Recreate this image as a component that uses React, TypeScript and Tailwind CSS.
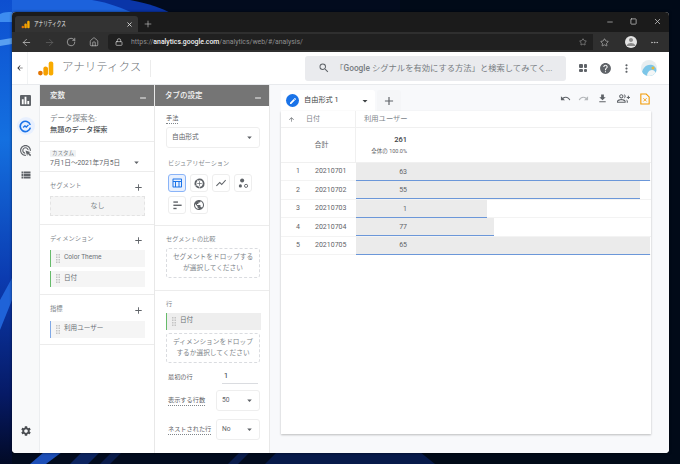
import React from 'react';
import { ArrowLeft, ArrowRight, RotateCw, Home, Lock, Star, Plus, X, Minus, Square, MoreHorizontal } from 'lucide-react';
import {
  MdArrowBack, MdArrowDropDown, MdBarChart, MdAdsClick, MdViewList, MdSettings, MdSearch, MdHelp, MdMoreVert,
  MdOutlineTableChart, MdShowChart, MdPublic, MdUndo, MdRedo, MdFileDownload,
  MdOutlineGroupAdd, MdEdit, MdArrowUpward, MdAdd, MdRemove, MdPerson,
} from 'react-icons/md';

const rows = [
  { n: 1, date: '20210701', v: 63, w: 294 },
  { n: 2, date: '20210702', v: 55, w: 284 },
  { n: 3, date: '20210703', v: 1, w: 131 },
  { n: 4, date: '20210704', v: 77, w: 138 },
  { n: 5, date: '20210705', v: 65, w: 294 },
];

const Wallpaper = () => (
  <svg className="absolute inset-0" width="680" height="464" viewBox="0 0 680 464">
    <defs>
      <linearGradient id="wall" x1="0" y1="0" x2="0" y2="1">
        <stop offset="0" stopColor="#0d4fd0" />
        <stop offset="0.3" stopColor="#1470e0" />
        <stop offset="0.6" stopColor="#0b3bb0" />
        <stop offset="0.85" stopColor="#061a66" />
        <stop offset="1" stopColor="#020a26" />
      </linearGradient>
    </defs>
    <rect width="680" height="464" fill="#020b1e" />
    <rect x="400" width="280" height="464" fill="#010a18" />
    <path d="M0 0H130C150 4 162 8 172 14L172 30H0Z" fill="#0a35a8" />
    <path d="M0 0H92C110 3 122 8 135 14H0Z" fill="#1c62dc" />
    <rect x="0" y="0" width="12" height="464" fill="url(#wall)" />
    <path d="M0 14C4 12 8 12 12 12V22H0Z" fill="#3d8cf0" />
    <path d="M0 40L12 38V44L0 46Z" fill="#5aa0f0" />
    <path d="M0 300L12 278V300L0 330Z" fill="#1f63d8" />
    <path d="M30 464L44 452H62L46 464Z" fill="#1d4fb8" />
    <path d="M70 464L82 452H100L88 464Z" fill="#0c2460" />
    <path d="M100 464L112 452H122L110 464Z" fill="#0a1c4c" />
    <path d="M228 464L240 452H250L238 464Z" fill="#0a1c4c" />
    <path d="M265 464L277 452H420L435 464Z" fill="#071a4a" />
  </svg>
);

const Logo = ({ className }: { className: string }) => (
  <svg className={className} viewBox="0 0 24 24">
    <rect x="16.5" y="2" width="6.5" height="20" rx="3" fill="#f9ab00" />
    <path d="M9 12c0-1.7 1.3-3 3-3s3.5 1.3 3.5 3v7c0 1.7-1.3 3-3.2 3S9 20.7 9 19z" fill="#f5a000" />
    <circle cx="4.8" cy="18.5" r="3.3" fill="#e37400" />
  </svg>
);

const ChromeBar = () => (
  <>
    <div className="flex h-5 shrink-0 items-end bg-[#1b1b1b] pl-[3px]">
      <div className="flex h-4 w-[123px] items-center rounded-t-[3px] bg-[#333333] pl-[6px] pr-[5px]">
        <Logo className="h-[9px] w-[9px]" />
        <span className="ml-[4px] w-[36px] origin-left scale-x-[0.66] whitespace-nowrap text-[7px] text-[#e8e8e8]">アナリティクス</span>
        <X className="ml-auto h-[7px] w-[7px] text-[#dddddd]" strokeWidth={3} />
      </div>
      <Plus className="ml-[5px] mb-[3px] h-[10px] w-[10px] text-[#c8c8c8]" strokeWidth={1.5} />
      <div className="ml-auto mb-[6px] flex items-center gap-[16px] pr-[7px]">
        <Minus className="h-[8px] w-[8px] text-[#cccccc]" />
        <Square className="h-[7px] w-[7px] text-[#cccccc]" strokeWidth={2.5} />
        <X className="h-[9px] w-[9px] text-[#cccccc]" strokeWidth={2} />
      </div>
    </div>
    <div className="flex h-5 shrink-0 items-center bg-[#2f2f2f] text-[#d0d0d0]">
      <div className="flex w-[96px] items-center pl-[9px]">
        <ArrowLeft className="h-[11px] w-[11px]" strokeWidth={1.5} />
        <ArrowRight className="ml-[12px] h-[11px] w-[11px] text-[#666666]" strokeWidth={1.5} />
        <RotateCw className="ml-[11px] h-[10px] w-[10px]" strokeWidth={1.5} />
        <Home className="ml-[13px] h-[10px] w-[10px]" strokeWidth={1.5} />
      </div>
      <div className="flex h-4 w-[485px] items-center rounded-l-[3px] bg-[#202020] pl-[7px] pr-[6px]">
        <Lock className="h-[8px] w-[8px] text-[#d8d8d8]" strokeWidth={2} />
        <span className="ml-[8px] whitespace-nowrap text-[6.9px] text-[#8e8e8e]">
          https://<span className="font-medium text-[#f0f0f0]">analytics.google.com</span>/analytics/web/#/analysis/
        </span>
        <Star className="ml-auto h-[8px] w-[8px] text-[#bbbbbb]" strokeWidth={1.5} />
      </div>
      <Star className="ml-[7px] h-[9px] w-[9px] text-[#d8d8d8]" strokeWidth={1.5} />
      <div className="ml-[16px] flex h-[12px] w-[12px] items-center justify-center overflow-hidden rounded-full bg-[#e4e4e4]">
        <MdPerson className="h-[12px] w-[12px] text-[#8a8a8a]" />
      </div>
      <MoreHorizontal className="ml-[13px] h-[9px] w-[9px] text-[#c8c8c8]" />
    </div>
  </>
);

const AppHeader = () => (
  <div className="flex h-[33px] shrink-0 items-center border-b border-[#e8eaed] bg-white">
    <div className="flex h-full w-[16px] items-center justify-center border-r border-[#f1f3f4]">
      <MdArrowBack className="h-[8px] w-[8px] text-[#202124]" />
    </div>
    <Logo className="ml-[9px] h-[17px] w-[17px]" />
    <span className="ml-[8px] text-[11.5px] font-light text-[#6b7075]">アナリティクス</span>
    <div className="ml-[9px] h-[17px] w-px bg-[#ececec]" />
    <div className="ml-[154px] flex h-[25px] w-[261px] items-center rounded-[3px] bg-[#eaebee] pl-[13px]">
      <MdSearch className="h-[12px] w-[12px] text-[#5f6368]" />
      <span className="ml-[5px] whitespace-nowrap text-[8.3px] text-[#777c81]">
        「<span className="font-medium">Google</span> シグナルを有効にする方法」と検索してみてく...
      </span>
    </div>
    <div className="ml-[13px] grid h-[8px] w-[8px] grid-cols-2 gap-[1px]">
      <i className="rounded-[1px] bg-[#5f6368]" />
      <i className="rounded-[1px] bg-[#5f6368]" />
      <i className="rounded-[1px] bg-[#5f6368]" />
      <i className="rounded-[1px] bg-[#5f6368]" />
    </div>
    <MdHelp className="ml-[12px] h-[13px] w-[13px] text-[#5f6368]" />
    <MdMoreVert className="ml-[8px] h-[13px] w-[13px] text-[#5f6368]" />
    <div className="ml-[8px] h-[16px] w-[16px] overflow-hidden rounded-full bg-[#e8eef0]">
      <svg viewBox="0 0 16 16" className="h-full w-full">
        <path d="M1 16C0 9 5 4 11 5c3 .6 5 4 5 8v3z" fill="#7cc6e8" />
        <path d="M6 16c0-3 2-6 5-6s4 3 4 6z" fill="#f3f6f6" />
        <circle cx="12" cy="8" r="1.5" fill="#e6b93a" />
      </svg>
    </div>
  </div>
);

const Sidebar = () => (
  <div className="flex w-[28px] shrink-0 flex-col items-center border-r border-[#eceef0] bg-[#f8f9fa] text-[#5f6368]">
    <MdBarChart className="mt-[10px] h-[11px] w-[11px] rounded-[1px] bg-[#5f6368] text-white" />
    <div className="mt-[11px] flex h-[18px] w-[18px] shrink-0 items-center justify-center rounded-full bg-[#e8f0fe]">
      <svg viewBox="0 0 24 24" className="h-[13px] w-[13px]" fill="none" stroke="#1a73e8" strokeWidth="3">
        <path d="M20.8 9A9.5 9.5 0 1 0 21 14" />
        <path d="M7.5 14l3.5-3 2.5 2 4-4" strokeWidth="2.5" />
      </svg>
    </div>
    <MdAdsClick className="mt-[8.5px] h-[13px] w-[13px] shrink-0" />
    <MdViewList className="mt-[12.5px] h-[12px] w-[12px] shrink-0" />
    <MdSettings className="mb-[16px] mt-auto h-[12px] w-[12px] text-[#4a4d51]" />
  </div>
);

const PanelHeader = ({ title }: { title: string }) => (
  <div className="flex h-[21px] shrink-0 items-start justify-between bg-[#757575] pl-[10px] pr-[6px] pt-[5px] text-[7.5px] font-medium text-[#f4f4f4]">
    <span>{title}</span>
    <MdRemove className="mt-[3px] h-[10px] w-[10px]" />
  </div>
);

const Dots = () => (
  <svg width="4" height="9" viewBox="0 0 4 9" className="shrink-0" fill="#c4c4c4">
    <rect x="0" y="0" width="1.5" height="1.5" />
    <rect x="2.5" y="0" width="1.5" height="1.5" />
    <rect x="0" y="2.5" width="1.5" height="1.5" />
    <rect x="2.5" y="2.5" width="1.5" height="1.5" />
    <rect x="0" y="5" width="1.5" height="1.5" />
    <rect x="2.5" y="5" width="1.5" height="1.5" />
    <rect x="0" y="7.5" width="1.5" height="1.5" />
    <rect x="2.5" y="7.5" width="1.5" height="1.5" />
  </svg>
);

const Chip = ({ label, blue, darker }: { label: string; blue?: boolean; darker?: boolean }) => (
  <div
    className={`flex h-[16.5px] w-[95px] items-center gap-[4px] border-l-[1.5px] pl-[5px] text-[6.6px] text-[#6b7075] ${blue ? 'border-[#7fa8e6]' : 'border-[#66bb6a]'} ${darker ? 'bg-[#eeeeee]' : 'bg-[#f5f5f5]'}`}
  >
    <Dots />
    <span>{label}</span>
  </div>
);

const VarSection = ({ title, h, children }: { title: string; h: number; children: React.ReactNode }) => (
  <div className="shrink-0 border-b border-[#ececec] px-[10px] pt-[9px]" style={{ height: h }}>
    <div className="flex h-[12px] items-center justify-between text-[6.3px] text-[#80868b]">
      <span>{title}</span>
      <MdAdd className="h-[11px] w-[11px] text-[#5f6368]" />
    </div>
    {children}
  </div>
);

const VariablesPanel = () => (
  <div className="flex w-[115px] shrink-0 flex-col border-r border-[#e8e8e8] bg-white">
    <PanelHeader title="変数" />
    <div className="h-[36px] shrink-0 border-b border-[#ececec] px-[10px] pt-[7px] text-[7.5px] leading-[11px]">
      <div className="text-[#80868b]">データ探索名:</div>
      <div className="text-[7.2px] font-medium text-[#4a4e52]">無題のデータ探索</div>
    </div>
    <div className="relative h-[30px] shrink-0 border-b border-[#ececec] px-[10px] pt-[8px]">
      <div className="w-[26px] rounded-[1px] bg-[#f1f3f4] text-center text-[5.5px] leading-[7px] text-[#80868b]">カスタム</div>
      <div className="mt-[1px] text-[6.7px] leading-[10px] text-[#5f6368]">7月1日～2021年7月5日</div>
      <MdArrowDropDown className="absolute right-[12px] top-[15px] h-[11px] w-[11px] text-[#5f6368]" />
    </div>
    <VarSection title="セグメント" h={53}>
      <div className="mt-[3px] flex h-[20px] w-[95px] items-center justify-center border border-dashed border-[#e3e3e3] bg-[#f5f5f5] text-[7px] text-[#80868b]">なし</div>
    </VarSection>
    <VarSection title="ディメンション" h={70}>
      <div className="mt-[4px] flex flex-col gap-[4px]">
        <Chip label="Color Theme" />
        <Chip label="日付" />
      </div>
    </VarSection>
    <VarSection title="指標" h={50}>
      <div className="mt-[5px]">
        <Chip label="利用ユーザー" blue />
      </div>
    </VarSection>
  </div>
);

const Select = ({ label, w, h }: { label: string; w: number; h: number }) => (
  <div
    className="flex shrink-0 items-center justify-between rounded-[3px] border border-[#eeeeee] bg-white pl-[5px] pr-[4px] text-[6.7px] text-[#5f6368]"
    style={{ width: w, height: h }}
  >
    <span>{label}</span>
    <MdArrowDropDown className="h-[11px] w-[11px]" />
  </div>
);

const VizButton = ({ children, active }: { children: React.ReactNode; active?: boolean }) => (
  <div
    className={`flex h-[18px] w-[18px] items-center justify-center rounded-[3px] border ${active ? 'border-[#8ab4f8] bg-[#e8f0fe] text-[#1a73e8]' : 'border-[#eeeeee] bg-white text-[#5f6368]'}`}
  >
    {children}
  </div>
);

const DropZone = ({ lines }: { lines: string[] }) => (
  <div className="flex h-[30px] w-[94px] flex-col items-center justify-center rounded-[3px] border border-dashed border-[#dadce0] text-[6.7px] leading-[11px] text-[#80868b]">
    {lines.map((l) => (
      <span key={l} className="whitespace-nowrap">{l}</span>
    ))}
  </div>
);

const DottedLabel = ({ children }: { children: React.ReactNode }) => (
  <div className="w-fit whitespace-nowrap border-b border-dotted border-[#80868b] text-[6.2px] leading-[10px] text-[#5f6368]">{children}</div>
);

const SettingsPanel = () => (
  <div className="flex w-[115px] shrink-0 flex-col border-r border-[#e8e8e8] bg-white">
    <PanelHeader title="タブの設定" />
    <div className="h-[120px] shrink-0 border-b border-[#ececec] pl-[11px] pt-[7px]">
      <div className="h-[10px]"><DottedLabel>手法</DottedLabel></div>
      <div className="mt-[4px]">
        <Select label="自由形式" w={94} h={21} />
      </div>
      <div className="ml-[2px] mt-[10px] text-[6.2px] leading-[10px] text-[#80868b]">ビジュアリゼーション</div>
      <div className="ml-[2px] mt-[6px] grid w-[85px] grid-cols-4 gap-x-[3.5px] gap-y-[4px]">
        <VizButton active><MdOutlineTableChart className="h-[12px] w-[12px]" /></VizButton>
        <VizButton>
          <svg viewBox="0 0 12 12" className="h-[11px] w-[11px]" fill="none" stroke="currentColor">
            <circle cx="6" cy="6" r="4.5" strokeWidth="2" strokeDasharray="6.5 0.6 4 0.6 6 0.6 10.5 0" />
            <path d="M6 3.5v5M3.5 6h5" strokeWidth="0.8" />
          </svg>
        </VizButton>
        <VizButton><MdShowChart className="h-[12px] w-[12px]" /></VizButton>
        <VizButton>
          <svg viewBox="0 0 12 12" className="h-[11px] w-[11px]" fill="currentColor">
            <circle cx="4.5" cy="2.8" r="2.2" />
            <circle cx="2.6" cy="8.6" r="1.7" />
            <circle cx="8.8" cy="8.6" r="1.7" fill="none" stroke="currentColor" />
          </svg>
        </VizButton>
        <VizButton>
          <svg viewBox="0 0 12 12" className="h-[11px] w-[11px]" fill="currentColor">
            <rect x="1.5" y="1.5" width="5" height="1.5" />
            <rect x="1.5" y="5" width="9" height="1.5" />
            <rect x="1.5" y="8.5" width="3.5" height="1.5" />
          </svg>
        </VizButton>
        <VizButton><MdPublic className="h-[12px] w-[12px]" /></VizButton>
      </div>
    </div>
    <div className="h-[65px] shrink-0 border-b border-[#ececec] pl-[11px] pt-[8px]">
      <div className="text-[6.2px] leading-[10px] text-[#80868b]">セグメントの比較</div>
      <div className="mt-[4px]">
        <DropZone lines={['セグメントをドロップする', 'が選択してください']} />
      </div>
    </div>
    <div className="flex-1 pl-[11px] pt-[8px]">
      <div className="text-[6.2px] leading-[10px] text-[#80868b]">行</div>
      <div className="mt-[4px]">
        <Chip label="日付" darker />
      </div>
      <div className="mt-[3.5px]">
        <DropZone lines={['ディメンションをドロップ', 'するか選択してください']} />
      </div>
      <div className="mt-[7px] flex h-[14px] items-start pl-[2px] text-[6.2px] text-[#5f6368]">
        <span className="mt-[3px]">最初の行</span>
        <div className="ml-[29px] w-[36px] border-b border-[#dadce0] pb-[1px] pl-[2px] text-[8px] text-[#3c4043]">1</div>
      </div>
      <div className="mt-[6px] flex items-center pl-[2px]">
        <div className="w-[48px]"><DottedLabel>表示する行数</DottedLabel></div>
        <Select label="50" w={44} h={21} />
      </div>
      <div className="mt-[8px] flex items-center pl-[2px]">
        <div className="w-[48px]"><DottedLabel>ネストされた行</DottedLabel></div>
        <Select label="No" w={44} h={21} />
      </div>
    </div>
  </div>
);

const Canvas = () => (
  <div className="flex min-w-0 flex-1 flex-col bg-[#f8f9fb] px-[11px] pt-[5px]">
    <div className="flex h-[21px] shrink-0 items-stretch text-[#5f6368]">
      <div className="flex w-[94px] items-center rounded-t-[3px] bg-white pl-[5px] pr-[4px]">
        <div className="flex h-[13px] w-[13px] items-center justify-center rounded-full bg-[#1a73e8]">
          <MdEdit className="h-[8px] w-[8px] text-white" />
        </div>
        <span className="ml-[5px] text-[7.2px] text-[#3c4043]">自由形式 1</span>
        <MdArrowDropDown className="ml-auto h-[12px] w-[12px] text-[#3c4043]" />
      </div>
      <div className="ml-[2px] flex w-[24px] items-center justify-center rounded-t-[3px] bg-[#f5f6f8]">
        <MdAdd className="h-[14px] w-[14px]" />
      </div>
      <div className="ml-auto flex items-center pb-[4px] pr-[8px]">
        <MdUndo className="h-[11px] w-[11px]" />
        <MdRedo className="ml-[7px] h-[11px] w-[11px] text-[#b5b8bb]" />
        <MdFileDownload className="ml-[8px] h-[11px] w-[11px]" />
        <MdOutlineGroupAdd className="ml-[9px] h-[13px] w-[13px]" />
        <svg viewBox="0 0 12 14" className="ml-[10px] h-[12px] w-[10px]" fill="none" stroke="#f29900" strokeWidth="1.3">
          <path d="M1 1h6.5L11 4.5V13H1z" />
          <path d="M4 6l4 4M8 6l-4 4" strokeWidth="1" />
        </svg>
      </div>
    </div>
    <div className="h-[323px] w-[370px] shrink-0 bg-white text-[7px] text-[#5f6368] shadow-[0_1px_2px_rgba(0,0,0,0.25)]">
      <div className="flex h-[17px] border-b border-[#f0f0f0]">
        <div className="flex w-[75px] items-center border-r border-[#f0f0f0] pl-[7px]">
          <MdArrowUpward className="h-[7px] w-[7px]" />
          <span className="ml-[11px] text-[#80868b]">日付</span>
        </div>
        <div className="flex flex-1 items-center pl-[8px] text-[7.3px] text-[#80868b]">利用ユーザー</div>
      </div>
      <div className="flex h-[35px] border-b border-[#f0f0f0]">
        <div className="flex w-[75px] items-center justify-center border-r border-[#f0f0f0] pl-[7px]">合計</div>
        <div className="w-[51px] pt-[6px] text-right">
          <div className="text-[7.5px] font-medium leading-[11px] text-[#3c4043]">261</div>
          <div className="mt-[2px] whitespace-nowrap text-[5.5px] leading-[9px]">全体の 100.0%</div>
        </div>
      </div>
      {rows.map((r) => (
        <div key={r.n} className="flex h-[18.4px] border-b border-[#f3f3f3]">
          <div className="flex w-[75px] items-center">
            <span className="w-[34px] text-center">{r.n}</span>
            <span>{r.date}</span>
          </div>
          <div
            className="flex h-[18px] items-center border-b-[1.5px] border-[#6b97d9] bg-[#ebebeb] pt-[1px]"
            style={{ width: r.w }}
          >
            <span className="w-[51px] text-right">{r.v}</span>
          </div>
        </div>
      ))}
    </div>
  </div>
);

export default function App() {
  return (
    <div className="relative h-[464px] w-[680px] overflow-hidden bg-[#020b1e] font-['Roboto','Noto_Sans_CJK_JP',sans-serif]">
      <Wallpaper />
      <div className="absolute left-[12px] top-[12px] flex h-[440.5px] w-[657px] flex-col overflow-hidden rounded-[4px] bg-white shadow-[0_0_3px_rgba(0,0,0,0.6)]">
        <ChromeBar />
        <AppHeader />
        <div className="flex min-h-0 flex-1">
          <Sidebar />
          <VariablesPanel />
          <SettingsPanel />
          <Canvas />
        </div>
      </div>
    </div>
  );
}
